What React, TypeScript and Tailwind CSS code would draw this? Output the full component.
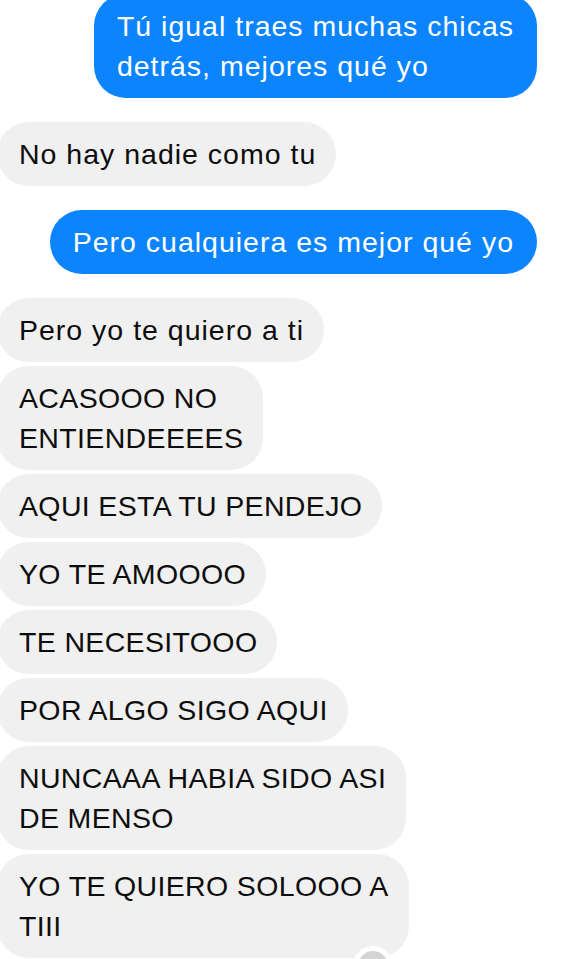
const font = { fontFamily: '"Liberation Sans", Arial, sans-serif' };

type Msg = { me: boolean; lines: string[]; gap: "big" | "small" | "none"; caps?: boolean };

const messages: Msg[] = [
  { me: true, lines: ["Tú igual traes muchas chicas", "detrás, mejores qué yo"], gap: "none" },
  { me: false, lines: ["No hay nadie como tu"], gap: "big" },
  { me: true, lines: ["Pero cualquiera es mejor qué yo"], gap: "big" },
  { me: false, lines: ["Pero yo te quiero a ti"], gap: "big" },
  { me: false, lines: ["ACASOOO NO", "ENTIENDEEEES"], gap: "small", caps: true },
  { me: false, lines: ["AQUI ESTA TU PENDEJO"], gap: "small", caps: true },
  { me: false, lines: ["YO TE AMOOOO"], gap: "small", caps: true },
  { me: false, lines: ["TE NECESITOOO"], gap: "small", caps: true },
  { me: false, lines: ["POR ALGO SIGO AQUI"], gap: "small", caps: true },
  { me: false, lines: ["NUNCAAA HABIA SIDO ASI", "DE MENSO"], gap: "small", caps: true },
  { me: false, lines: ["YO TE QUIERO SOLOOO A", "TIII"], gap: "small", caps: true },
];

function Bubble({ msg }: { msg: Msg }) {
  const spacing =
    msg.gap === "big" ? "mt-[24px]" : msg.gap === "small" ? "mt-[4px]" : "-mt-[6px]";
  const tracking = msg.caps ? "tracking-[0.35px]" : "tracking-[1px]";

  if (msg.me) {
    return (
      <div className={`flex justify-end pr-[43px] ${spacing}`}>
        <div className={`rounded-[32px] bg-[#0b84fd] px-[23px] py-3 text-white ${tracking}`}>
          {msg.lines.map((l) => (
            <div key={l} className="whitespace-nowrap">
              {l}
            </div>
          ))}
        </div>
      </div>
    );
  }

  return (
    <div className={`flex justify-start ${spacing}`}>
      <div
        className={`-ml-[3px] rounded-[32px] bg-[#f0f0f0] py-3 pl-[22px] pr-[20px] text-[#0d0d0d] ${tracking}`}
      >
        {msg.lines.map((l) => (
          <div key={l} className="whitespace-nowrap">
            {l}
          </div>
        ))}
      </div>
    </div>
  );
}

export default function App() {
  return (
    <div
      className="relative h-[959px] w-[580px] overflow-hidden bg-white text-[28.5px] leading-[40px]"
      style={font}
    >
      <div className="flex flex-col">
        {messages.map((m, i) => (
          <Bubble key={i} msg={m} />
        ))}
      </div>

      {/* read receipt avatar */}
      <div className="absolute left-[353px] top-[946px] h-[40px] w-[40px] rounded-full bg-white p-[5px]">
        <div className="h-full w-full rounded-full bg-[#d4d4d4]" />
      </div>
    </div>
  );
}
